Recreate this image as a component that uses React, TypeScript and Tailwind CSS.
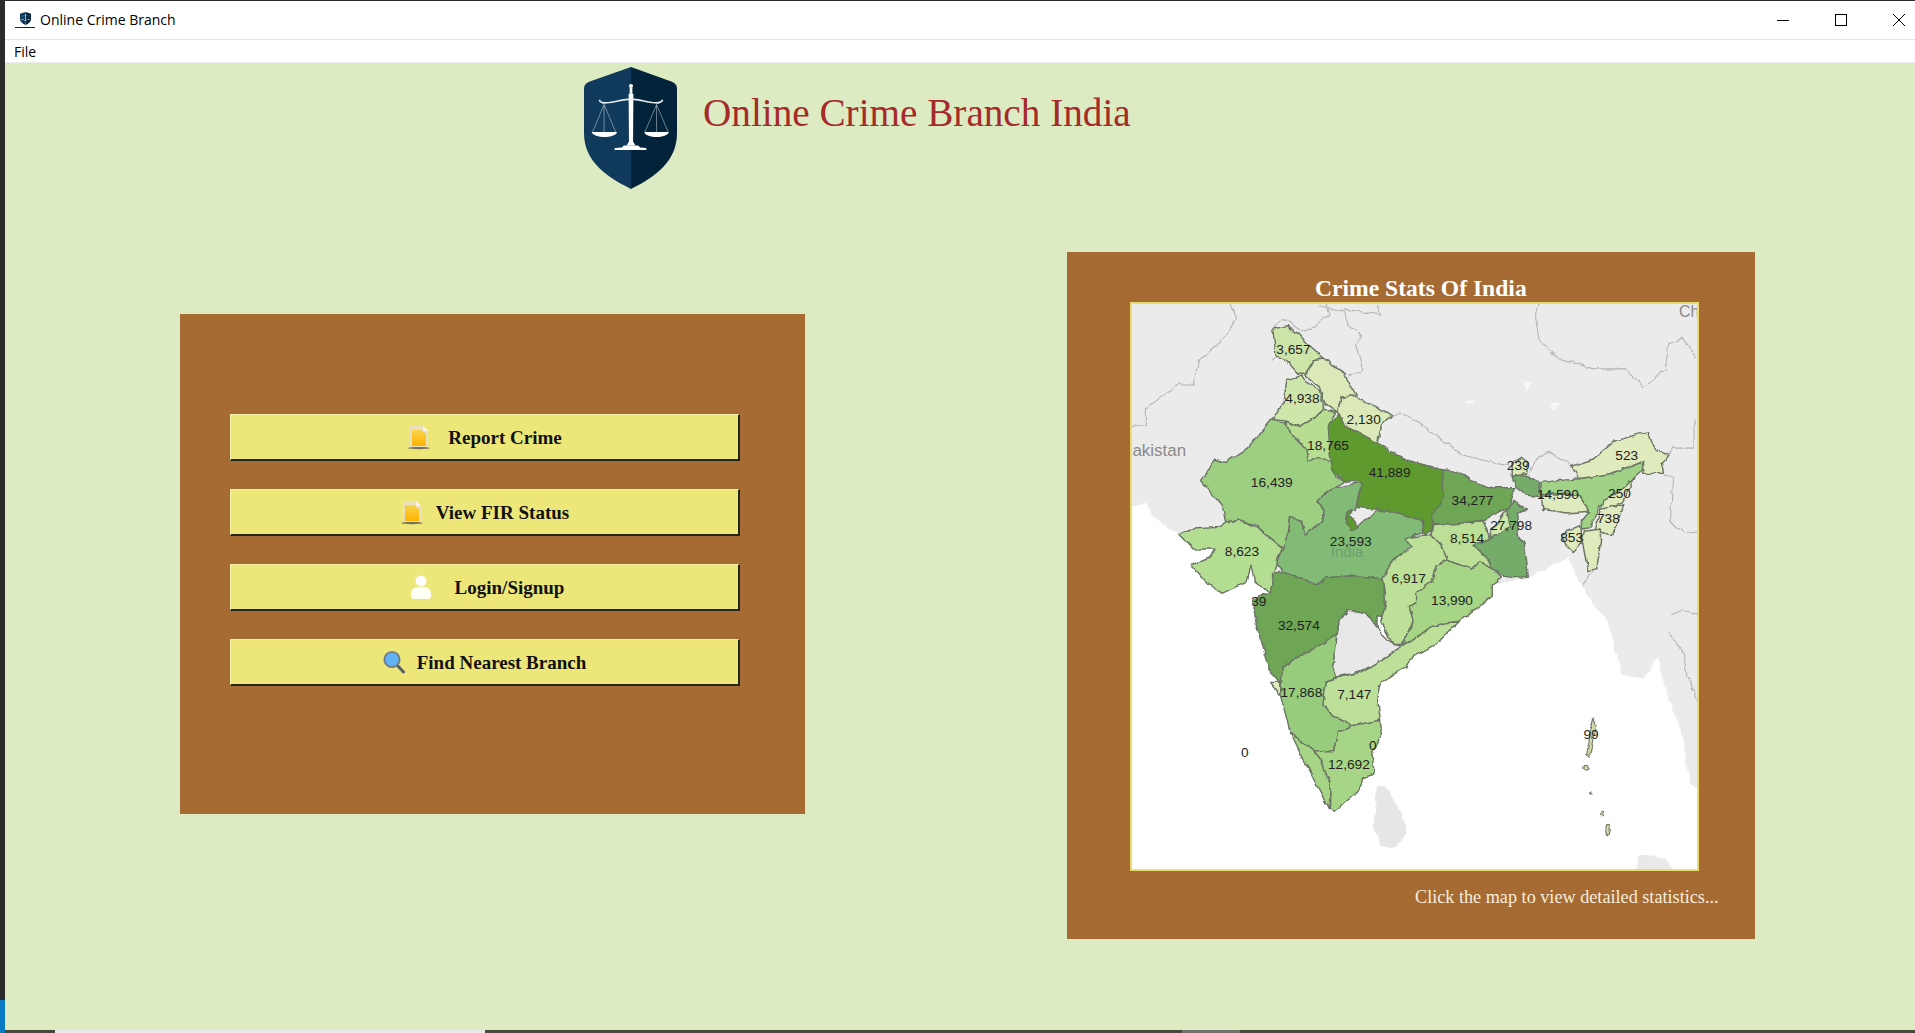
import React from "react";

type State = { fill: string; pts: string };

const states: State[] = [
  { fill: "#cde5a9", pts: "390,70 430,60 465,85 490,115 530,150 505,155 480,195 460,195 425,155 400,145 395,105" },
  { fill: "#dbe9b8", pts: "505,155 530,150 590,190 600,215 625,255 580,258 570,300 535,275 520,230 480,200" },
  { fill: "#cfe6ab", pts: "430,210 470,200 480,215 520,240 535,290 500,320 465,340 430,325 390,320 420,270" },
  { fill: "#dbe9b8", pts: "570,300 580,260 610,255 660,275 720,310 695,335 680,385 625,355 590,340" },
  { fill: "#b6dd90", pts: "425,325 465,340 500,320 535,295 565,300 545,340 555,440 535,440 520,425 490,435 480,395 440,360" },
  { fill: "#9ccf80", pts: "385,322 425,330 440,360 480,395 490,435 520,425 555,440 565,480 590,490 530,530 515,550 530,570 530,600 500,625 480,640 470,600 440,590 435,630 420,680 370,640 350,615 300,600 260,605 250,560 225,530 190,490 230,430 260,440 320,400" },
  { fill: "#b3dd90", pts: "130,640 160,625 240,620 260,605 300,600 350,620 370,640 418,680 400,720 390,760 385,800 340,770 330,725 320,770 250,803 205,770 165,725 215,705 230,680 170,680" },
  { fill: "#82bb75", pts: "640,495 630,525 620,570 600,575 595,605 620,625 680,570 740,580 805,600 810,635 755,650 778,675 720,715 695,765 600,755 540,760 510,780 470,760 420,745 400,720 418,680 435,630 440,590 470,605 480,640 530,600 530,570 515,545 560,510" },
  { fill: "#5f9a2e", pts: "575,305 590,340 625,355 680,385 720,410 770,435 860,460 868,535 835,585 830,630 815,640 805,600 740,580 680,570 625,565 630,525 640,495 590,490 560,470 550,420 545,340" },
  { fill: "#5f9a2e", pts: "600,575 615,570 605,590 630,620 610,628 595,610" },
  { fill: "#6ea657", pts: "390,745 420,745 470,760 510,780 540,760 600,755 695,765 700,830 715,870 680,865 680,900 650,860 600,850 575,880 570,915 520,950 480,970 430,1000 410,1050 385,1020 345,890 335,820 385,800 390,760" },
  { fill: "#98cc7d", pts: "570,915 555,1000 565,1035 540,1045 530,1110 555,1140 610,1170 570,1190 560,1240 505,1240 440,1190 410,1080 415,1010 480,970 520,950" },
  { fill: "#dfeabd", pts: "385,1050 410,1050 410,1085" },
  { fill: "#e8e8e8", pts: "600,850 650,860 680,900 725,945 750,950 690,990 640,1020 565,1035 555,1000 570,915 575,880" },
  { fill: "#bde098", pts: "540,1045 640,1020 690,990 750,950 790,925 830,895 870,885 905,882 840,945 770,985 760,1010 730,1025 690,1050 680,1090 690,1155 630,1175 610,1170 555,1140 530,1110" },
  { fill: "#bde098", pts: "755,650 830,640 860,670 875,710 845,725 830,770 790,800 790,830 770,840 780,880 750,945 725,945 690,880 705,830 695,765 720,715 778,675" },
  { fill: "#a6d585", pts: "845,725 875,712 945,735 965,715 1000,735 1025,760 1000,780 1000,810 960,845 905,880 870,885 830,895 790,925 750,945 780,880 770,840 790,830 790,800 830,770" },
  { fill: "#bbdf96", pts: "835,612 940,605 975,600 995,650 950,670 990,710 1000,735 965,715 945,735 875,712 860,670 830,640" },
  { fill: "#6ea657", pts: "860,460 905,465 940,490 1000,510 1065,510 1045,565 1025,575 975,600 900,610 835,610 835,585 868,535" },
  { fill: "#74ac6a", pts: "950,670 995,650 1000,625 1040,570 1045,565 1060,545 1095,570 1070,580 1075,640 1090,670 1100,755 1060,760 1030,755 1000,735 990,710" },
  { fill: "#cfe8ab", pts: "1000,650 995,625 1020,600 1040,570 1050,620" },
  { fill: "#dbe9b8", pts: "1055,440 1080,425 1100,440 1095,470 1055,478" },
  { fill: "#74ac6a", pts: "1055,480 1095,475 1130,495 1135,535 1095,530 1065,505" },
  { fill: "#dfeabd", pts: "1135,530 1240,530 1270,575 1205,580 1140,570" },
  { fill: "#9fd285", pts: "1135,495 1240,485 1330,470 1420,435 1420,460 1385,490 1340,530 1300,560 1270,620 1250,625 1250,600 1270,575 1240,530 1135,525" },
  { fill: "#dfeabd", pts: "1220,450 1280,430 1340,380 1430,355 1450,405 1490,420 1470,445 1475,470 1420,470 1420,435 1330,470 1240,485" },
  { fill: "#dfeabd", pts: "1340,530 1385,490 1385,510 1360,550 1300,575 1310,545" },
  { fill: "#dfeabd", pts: "1300,570 1365,555 1350,610 1330,640 1285,630" },
  { fill: "#dfeabd", pts: "1190,640 1245,615 1250,660 1225,690 1205,670" },
  { fill: "#dfeabd", pts: "1255,630 1300,625 1300,660 1290,735 1265,740 1250,660" },
  { fill: "#a6d585", pts: "440,1190 505,1240 525,1265 550,1330 548,1400 520,1350 490,1290" },
  { fill: "#a6d585", pts: "570,1190 610,1170 690,1155 692,1200 665,1240 672,1305 640,1315 630,1350 590,1385 560,1412 548,1400 550,1330 525,1265 505,1240 560,1240" },
];

const borders = [
  "0,340 40,335 40,290 90,250 130,225 170,225 185,160 215,130 260,90 290,40 275,0",
  "385,160 400,145 395,60 420,40 470,75 510,60 550,30 540,0",
  "520,5 590,20 600,60 640,90 620,110 640,170 640,185 600,200",
  "590,15 690,30 680,0",
  "720,310 745,300 800,330 850,370 880,390 920,420 1000,440 1050,450",
  "1100,480 1120,430 1160,410 1220,450",
  "1130,0 1120,40 1130,100 1180,150 1280,180 1370,180 1420,230 1480,180 1490,110 1530,95 1568,150",
  "1490,420 1500,400 1560,400 1560,320",
  "1475,470 1500,480 1495,600 1530,635 1568,630",
  "1250,780 1280,740",
  "1500,860 1530,850 1568,860",
  "1490,910 1530,970 1540,1030 1568,1100",
];

const labels: [string, number, number][] = [
  ["3,657", 448, 127], ["4,938", 473, 265], ["2,130", 643, 323], ["18,765", 544, 395],
  ["41,889", 715, 470], ["16,439", 388, 498], ["8,623", 305, 687], ["23,593", 607, 660],
  ["34,277", 945, 547], ["27,798", 1052, 615], ["8,514", 930, 652], ["6,917", 768, 764],
  ["13,990", 888, 825], ["39", 352, 826], ["32,574", 463, 893], ["17,868", 470, 1080],
  ["7,147", 617, 1084], ["0", 668, 1228], ["12,692", 602, 1280], ["0", 313, 1245],
  ["99", 1274, 1197], ["239", 1072, 450], ["14,590", 1182, 530], ["250", 1353, 527],
  ["738", 1322, 598], ["853", 1220, 650], ["523", 1373, 423],
];

function IndiaMap() {
  return (
    <svg viewBox="0 0 1568 1568" className="block w-full h-full">
      <defs>
        <filter id="rough" x="-5%" y="-5%" width="110%" height="110%">
          <feTurbulence type="fractalNoise" baseFrequency="0.035" numOctaves="3" seed="4" result="n" />
          <feDisplacementMap in="SourceGraphic" in2="n" scale="14" xChannelSelector="R" yChannelSelector="G" result="d" />
          <feGaussianBlur in="d" stdDeviation="1" />
        </filter>
      </defs>
      <rect width="1568" height="1568" fill="#ffffff" />
      <g filter="url(#rough)">
        <polygon
          fill="#ebebeb"
          points="-20,-20 1590,-20 1590,1390 1540,1300 1530,1200 1490,1100 1460,980 1420,1040 1360,1030 1340,960 1320,880 1290,850 1240,770 1210,705 1100,760 900,800 500,800 130,640 100,620 60,590 40,555 -20,565"
        />
        <polygon fill="#e6e6e6" points="680,1335 715,1350 745,1410 765,1465 735,1505 695,1508 670,1450" />
        <polygon fill="#e9e9e9" points="1390,1590 1410,1525 1480,1540 1510,1590" />
        <polygon fill="#f8f8f8" points="1085,215 1110,215 1100,240" />
        <polygon fill="#f8f8f8" points="925,268 950,268 950,278 925,278" />
        <polygon fill="#f8f8f8" points="1160,275 1190,275 1170,295" />
        {borders.map((b) => (
          <polyline key={b} points={b} fill="none" stroke="#b4b4b4" strokeWidth="3" />
        ))}
        {states.map((s) => (
          <polygon key={s.pts} points={s.pts} fill={s.fill} stroke="#6b7565" strokeWidth="4" strokeLinejoin="round" />
        ))}
        <g fill="#cfdca8" stroke="#6b7565" strokeWidth="3">
          <polygon points="1282,1148 1288,1170 1280,1200 1270,1255 1262,1250 1272,1190" />
          <ellipse cx="1260" cy="1288" rx="6" ry="8" />
          <circle cx="1273" cy="1360" r="3" />
          <circle cx="1305" cy="1413" r="5" />
          <ellipse cx="1321" cy="1460" rx="6" ry="13" />
        </g>
      </g>
      <g fontFamily="'Liberation Sans', Arial, sans-serif">
        <text x="150" y="421" textAnchor="end" fontSize="47" fill="#8a8a8a">Pakistan</text>
        <text x="1518" y="37" fontSize="44" fill="#8a8a8a">Ch</text>
        <text x="597" y="703" textAnchor="middle" fontSize="42" fill="#6f9f70">India</text>
        {labels.map(([t, x, y]) => (
          <text key={`${t}-${x}`} x={x} y={y + 11} textAnchor="middle" fontSize="38" fill="#1f1f1f">
            {t}
          </text>
        ))}
      </g>
    </svg>
  );
}

function Shield({ className }: { className?: string }) {
  return (
    <svg viewBox="15 18 273 364" preserveAspectRatio="none" className={className}>
      <path d="M153 18 L30 62 Q15 68 15 82 L15 215 C15 300 80 345 153 382 Z" fill="#0f3a5c" />
      <path d="M153 18 L273 62 Q288 68 288 82 L288 215 C288 300 225 345 153 382 Z" fill="#02233a" />
      <g fill="#ffffff">
        <circle cx="153" cy="75" r="6" />
        <rect x="149" y="80" width="8" height="18" />
        <path d="M146 98 H160 L159 240 L166 252 H140 L147 240 Z" />
        <path d="M132 252 H174 L180 258 L198 260 V266 H105 V260 L126 258 Z" />
        <path d="M38 212 H112 C108 232 42 232 38 212 Z" />
        <path d="M192 212 H264 C260 232 196 232 192 212 Z" />
      </g>
      <g fill="none" stroke="#e8edf1">
        <path d="M60 116 C62 126 72 126 90 124 C115 120 135 114 153 114 C172 114 190 120 215 124 C232 126 243 126 246 116" strokeWidth="5" />
        <path d="M74 130 L40 212 M74 130 L108 212 M74 130 V212 M228 130 L194 212 M228 130 L262 212 M228 130 V212" strokeWidth="1.8" opacity="0.75" />
      </g>
    </svg>
  );
}

function DocIcon() {
  return (
    <svg viewBox="0 0 24 25" className="w-6 h-[25px] shrink-0">
      <defs>
        <linearGradient id="docGold" x1="0" y1="0" x2="0" y2="1">
          <stop offset="0" stopColor="#f7d34a" />
          <stop offset="1" stopColor="#ffb400" />
        </linearGradient>
      </defs>
      <ellipse cx="12" cy="23" rx="11" ry="1.2" fill="#77735a" />
      <path d="M3 1 H16 L21 6 V22 H3 Z" fill="#e9e1bd" />
      <path d="M5 5 H14 L19 9 V21 H5 Z" fill="url(#docGold)" />
      <path d="M16 1 V6 H21 Z" fill="#f8f5ea" />
    </svg>
  );
}

function UserIcon() {
  return (
    <svg viewBox="0 0 20 25" className="w-5 h-[25px] shrink-0">
      <circle cx="10" cy="6" r="5.5" fill="#ffffff" />
      <path d="M0 21 V18 C0 14 4 12 7 12 H13 C16 12 20 14 20 18 V21 Q20 24 17 24 H3 Q0 24 0 21 Z" fill="#fffff4" />
    </svg>
  );
}

function SearchIcon() {
  return (
    <svg viewBox="0 0 22 24" className="w-[22px] h-6 shrink-0">
      <line x1="14" y1="15" x2="20.5" y2="22" stroke="#555f66" strokeWidth="3" strokeLinecap="round" />
      <circle cx="9" cy="9.5" r="7.6" fill="#63b4f5" stroke="#6d7f8d" strokeWidth="2" />
    </svg>
  );
}

function MenuButton({ gap, icon, label }: { gap: string; icon: React.ReactNode; label: string }) {
  return (
    <button
      className={`h-[47px] w-[510px] flex items-center justify-center bg-[#ede679] border-t border-l border-t-[#f7f2a8] border-l-[#f7f2a8] border-b-2 border-r-2 border-b-[#24241a] border-r-[#24241a] text-[19px] font-bold text-[#111] ${gap}`}
    >
      {icon}
      <span className="pt-[3px]">{label}</span>
    </button>
  );
}

export default function App() {
  return (
    <div className="h-screen w-full overflow-hidden flex bg-[#2b2b2b] font-['Liberation_Serif',serif]">
      <div className="w-[5px] flex flex-col justify-end shrink-0">
        <div className="h-[33px] bg-[#0a7ac4]" />
      </div>
      <div className="flex-1 min-w-0 flex flex-col pt-px">
        <div className="h-[38px] bg-white flex items-center shrink-0 font-['Open_Sans',sans-serif] text-[14px] text-black">
          <div className="ml-[10px] w-5 flex flex-col items-center">
            <Shield className="w-[11px] h-[13px]" />
            <div className="w-5 h-px bg-[#222] mt-[2px]" />
          </div>
          <span className="ml-[5px] pb-[2px]">Online Crime Branch</span>
          <div className="ml-auto flex items-center gap-[46px] pr-[10px]">
            <svg viewBox="0 0 12 12" className="w-3 h-3"><line x1="0" y1="6.5" x2="12" y2="6.5" stroke="#000" /></svg>
            <svg viewBox="0 0 12 12" className="w-3 h-3"><rect x="0.5" y="0.5" width="11" height="11" fill="none" stroke="#000" /></svg>
            <svg viewBox="0 0 12 12" className="w-3 h-3"><path d="M0 0 L12 12 M12 0 L0 12" stroke="#000" /></svg>
          </div>
        </div>
        <div className="h-6 bg-white border-t border-[#e3e3e3] border-b border-b-[#eeeeee] flex items-center shrink-0 font-['Open_Sans',sans-serif] text-[14px] text-black">
          <span className="ml-[9px] pt-px">File</span>
        </div>
        <main className="flex-1 min-h-0 bg-[#ddebc3] flex flex-col">
          <header className="flex items-start h-[189px] pl-[579px] pt-[4px]">
            <Shield className="w-[93px] h-[122px]" />
            <h1 className="ml-[26px] mt-[23px] text-[39.2px] leading-[46px] font-normal text-[#a52a2a] whitespace-nowrap">
              Online Crime Branch India
            </h1>
          </header>
          <div className="flex items-start">
            <section className="ml-[175px] mt-[62px] w-[625px] h-[500px] bg-[#a66b33] pl-[50px] pt-[100px] flex flex-col gap-[28px]">
              <MenuButton gap="gap-[17px]" icon={<DocIcon />} label="Report Crime" />
              <MenuButton gap="gap-[12px]" icon={<DocIcon />} label="View FIR Status" />
              <MenuButton gap="gap-[24px] pl-[6px]" icon={<UserIcon />} label="Login/Signup" />
              <MenuButton gap="gap-[12px]" icon={<SearchIcon />} label="Find Nearest Branch" />
            </section>
            <section className="ml-[262px] w-[688px] h-[687px] bg-[#a66b33] pl-[63px] flex flex-col items-start">
              <h2 className="ml-[185px] mt-[22px] h-[28px] text-[23.6px] leading-[28px] font-bold text-white whitespace-nowrap">
                Crime Stats Of India
              </h2>
              <div className="w-[569px] h-[569px] border-2 border-[#e9dc6c] overflow-hidden">
                <IndiaMap />
              </div>
              <p className="ml-[285px] mt-[14px] text-[18.2px] leading-6 text-[#f6ecdc] whitespace-nowrap">
                Click the map to view detailed statistics...
              </p>
            </section>
          </div>
        </main>
        <div className="h-[3px] shrink-0 bg-[#47493a] flex">
          <div className="ml-[50px] w-[430px] bg-[#e8e8ee]" />
          <div className="ml-[697px] w-[58px] bg-[#70726a]" />
        </div>
      </div>
    </div>
  );
}
